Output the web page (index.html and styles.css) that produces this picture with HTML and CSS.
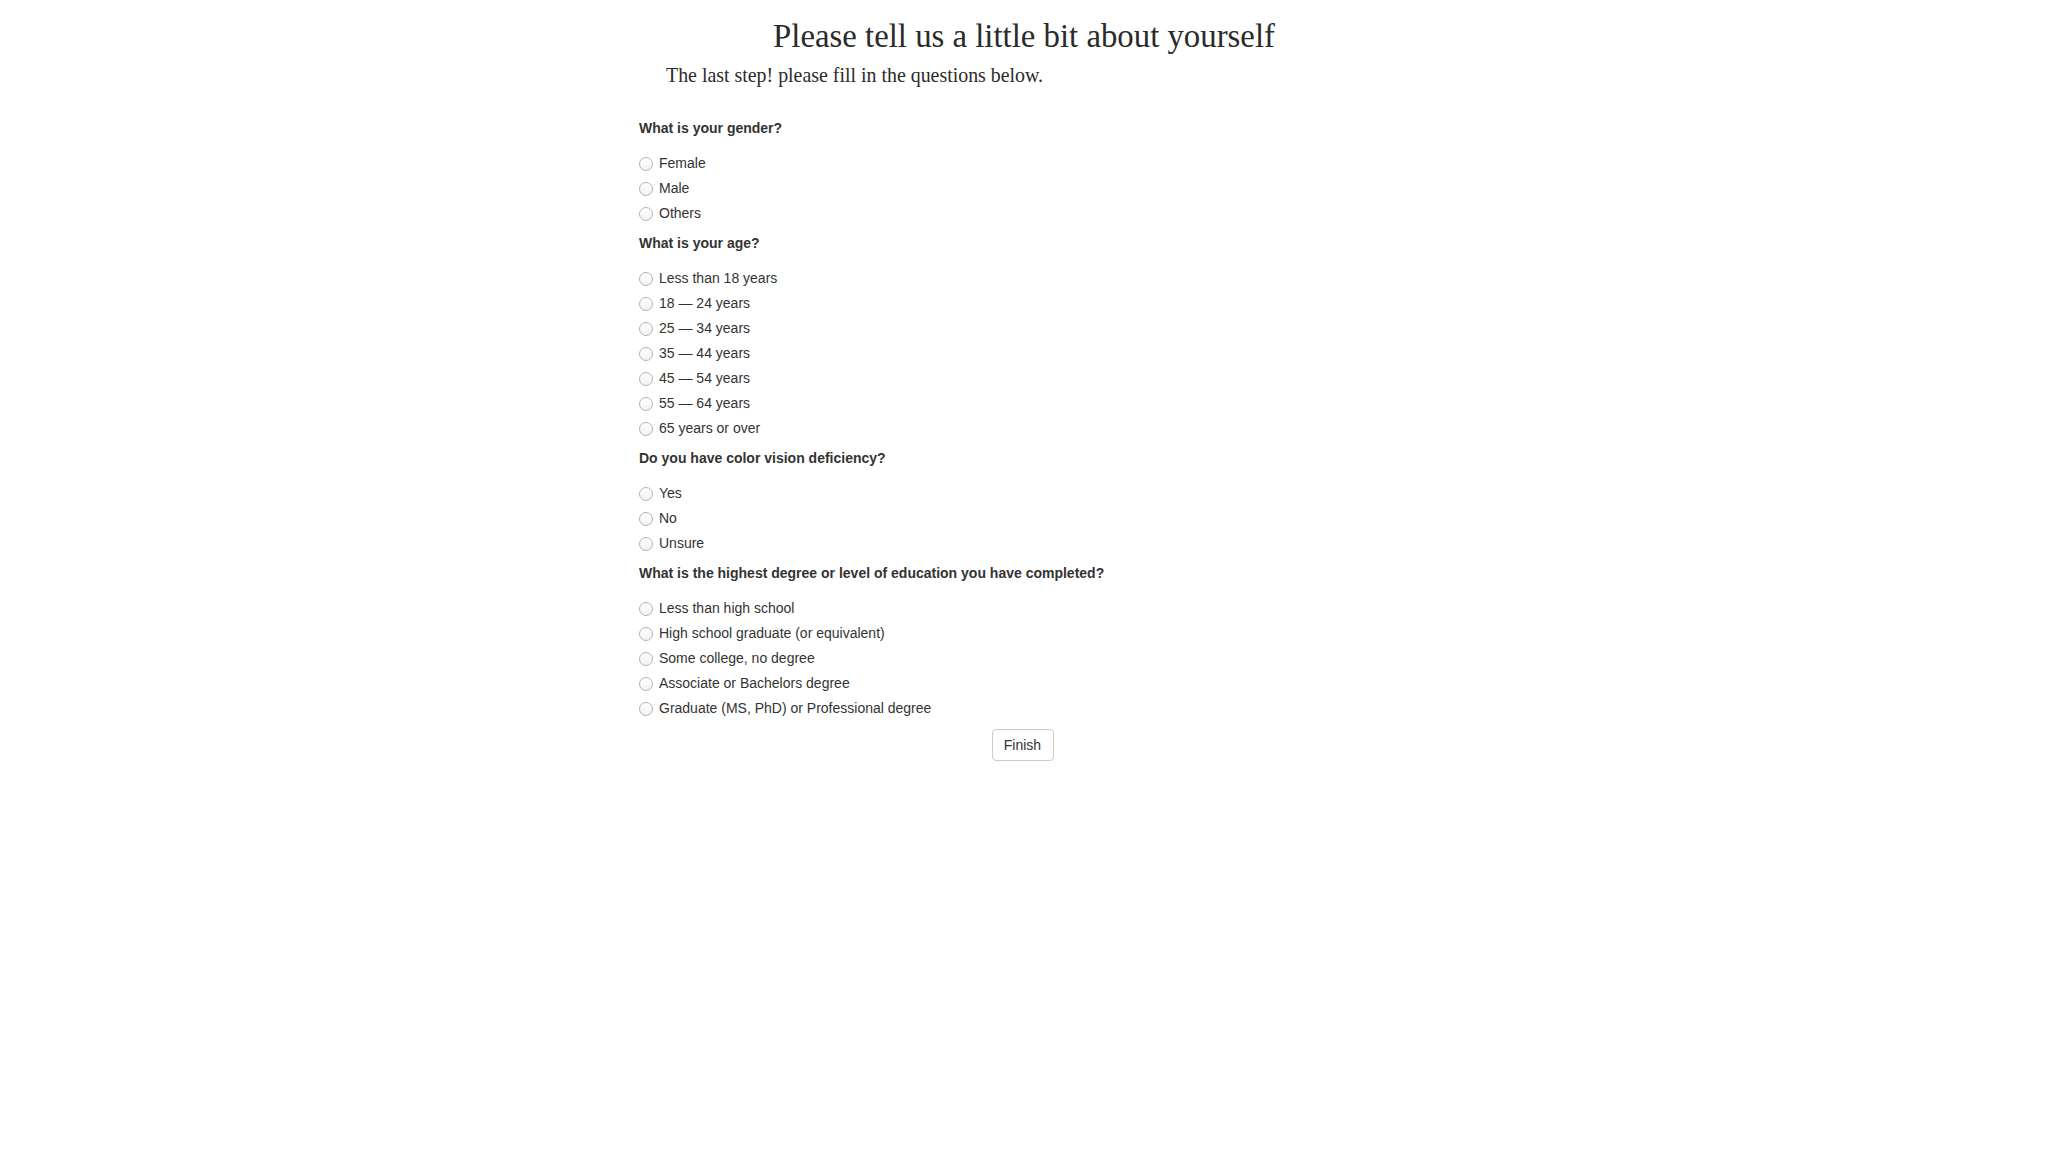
FILE: index.html
```html
<!DOCTYPE html>
<html lang="en">
<head>
<meta charset="utf-8">
<title>Survey</title>
<link rel="stylesheet" href="styles.css">
</head>
<body>
<div class="page">
  <h1 class="title">Please tell us a little bit about yourself</h1>
  <p class="subtitle">The last step! please fill in the questions below.</p>
  <form class="survey">
    <div class="question">
      <p class="q-text">What is your gender?</p>
      <label class="option"><input type="radio" name="gender"><span>Female</span></label>
      <label class="option"><input type="radio" name="gender"><span>Male</span></label>
      <label class="option"><input type="radio" name="gender"><span>Others</span></label>
    </div>
    <div class="question">
      <p class="q-text">What is your age?</p>
      <label class="option"><input type="radio" name="age"><span>Less than 18 years</span></label>
      <label class="option"><input type="radio" name="age"><span>18 — 24 years</span></label>
      <label class="option"><input type="radio" name="age"><span>25 — 34 years</span></label>
      <label class="option"><input type="radio" name="age"><span>35 — 44 years</span></label>
      <label class="option"><input type="radio" name="age"><span>45 — 54 years</span></label>
      <label class="option"><input type="radio" name="age"><span>55 — 64 years</span></label>
      <label class="option"><input type="radio" name="age"><span>65 years or over</span></label>
    </div>
    <div class="question">
      <p class="q-text">Do you have color vision deficiency?</p>
      <label class="option"><input type="radio" name="cvd"><span>Yes</span></label>
      <label class="option"><input type="radio" name="cvd"><span>No</span></label>
      <label class="option"><input type="radio" name="cvd"><span>Unsure</span></label>
    </div>
    <div class="question">
      <p class="q-text">What is the highest degree or level of education you have completed?</p>
      <label class="option"><input type="radio" name="edu"><span>Less than high school</span></label>
      <label class="option"><input type="radio" name="edu"><span>High school graduate (or equivalent)</span></label>
      <label class="option"><input type="radio" name="edu"><span>Some college, no degree</span></label>
      <label class="option"><input type="radio" name="edu"><span>Associate or Bachelors degree</span></label>
      <label class="option"><input type="radio" name="edu"><span>Graduate (MS, PhD) or Professional degree</span></label>
    </div>
    <div class="actions">
      <button type="button" class="btn">Finish</button>
    </div>
  </form>
</div>
</body>
</html>
```
FILE: styles.css
```css
html, body {
  margin: 0;
  padding: 0;
  background: #ffffff;
}
body {
  color: #333333;
  font-family: "Liberation Sans", Arial, sans-serif;
  font-size: 14px;
}
.page {
  display: flex;
  flex-direction: column;
  padding-top: 16px;
}
.title {
  margin: 0;
  font-family: "Liberation Serif", "Times New Roman", serif;
  font-weight: normal;
  font-size: 32.8px;
  line-height: 40px;
  text-align: center;
  color: #2b2b2b;
}
.subtitle {
  margin: 7px 0 0 666px;
  font-family: "Liberation Serif", "Times New Roman", serif;
  font-size: 19.9px;
  line-height: 24px;
  color: #2b2b2b;
}
.survey {
  width: 770px;
  margin: 31px auto 0;
  display: flex;
  flex-direction: column;
}
.question {
  display: flex;
  flex-direction: column;
  margin-bottom: 7px;
}
.q-text {
  margin: 0 0 13px;
  font-weight: bold;
  line-height: 20px;
}
.option {
  display: flex;
  align-items: center;
  height: 25px;
  line-height: 25px;
}
.option input {
  -webkit-appearance: none;
  appearance: none;
  box-sizing: border-box;
  width: 14px;
  height: 14px;
  margin: 0 6px 0 0;
  border: 1px solid #b3b3b3;
  border-radius: 50%;
  background: linear-gradient(#ffffff, #f2f2f2);
  flex: none;
}
.actions {
  display: flex;
  justify-content: center;
  margin-top: 1px;
}
.btn {
  width: 62px;
  height: 32px;
  margin-right: 3px;
  border: 1px solid #cccccc;
  border-radius: 4px;
  background: #ffffff;
  color: #333333;
  font-family: "Liberation Sans", Arial, sans-serif;
  font-size: 14px;
  padding: 0;
}
```
